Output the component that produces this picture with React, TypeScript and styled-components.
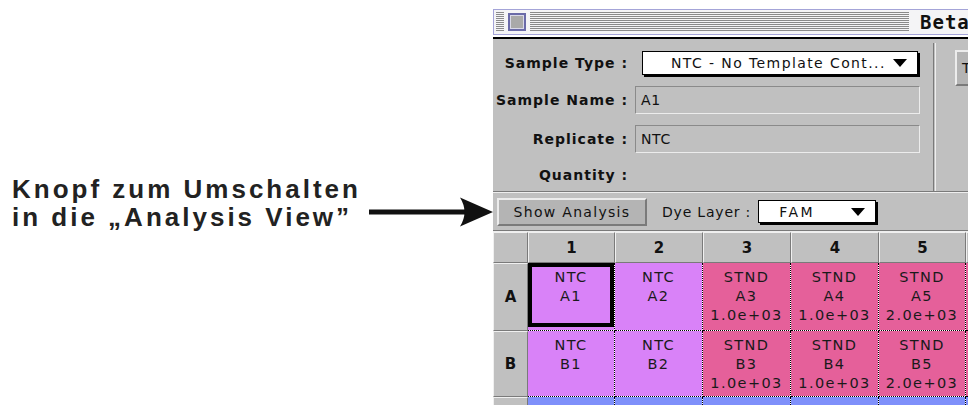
import React from "react";
import styled, { createGlobalStyle, css } from "styled-components";

const Global = createGlobalStyle`
  html, body { margin: 0; padding: 0; background: #fff; }
  body { width: 968px; height: 405px; overflow: hidden; }
`;

const Page = styled.div`
  display: flex;
  width: 968px;
  height: 405px;
  overflow: hidden;
  background: #fff;
`;

const Annotation = styled.div`
  flex: none;
  width: 493px;
  display: flex;
  align-items: flex-start;
  padding-top: 175px;
  box-sizing: border-box;
`;

const Caption = styled.div`
  margin-left: 12px;
  font-family: "Liberation Sans", Arial, sans-serif;
  font-weight: 700;
  font-size: 26px;
  line-height: 28px;
  letter-spacing: 3px;
  color: #222;
  white-space: nowrap;
`;

const ArrowSvg = styled.svg`
  margin-left: auto;
  margin-top: 22px;
  flex: none;
`;

const Win = styled.div`
  flex: none;
  width: 520px;
  margin-top: 9px;
  background: #fff;
  font-family: "DejaVu Sans", sans-serif;
  color: #111;
`;

const TitleBar = styled.div`
  height: 26px;
  box-sizing: border-box;
  border: 1px solid #a4a4d8;
  background: #f4f4f6;
  display: flex;
  align-items: center;
  padding: 0 2px;
  gap: 3px;
  overflow: hidden;
`;

const Stripes = styled.div<{ $w: number }>`
  height: 20px;
  width: ${(p) => p.$w}px;
  flex: none;
  background: repeating-linear-gradient(to bottom, #8a8a8a 0 1px, #f4f4f6 1px 2px);
`;

const CloseBox = styled.div`
  flex: none;
  width: 18px;
  height: 18px;
  box-sizing: border-box;
  border: 2px solid #6a6aa8;
  background: #a9a9a9;
  box-shadow: inset 0 0 0 1px #d8d8e8;
  margin: 0 1px;
`;

const Title = styled.div`
  flex: none;
  padding: 0 8px;
  font-family: "DejaVu Sans Mono", monospace;
  font-weight: 700;
  font-size: 19px;
  letter-spacing: 1px;
  color: #111;
`;

const TopPanel = styled.div`
  margin-top: 2px;
  border-top: 2px solid #000;
  height: 152px;
  background: #c0c0c0;
  display: flex;
`;

const Form = styled.div`
  flex: none;
  width: 440px;
  padding-top: 12px;
  display: grid;
  grid-template-columns: 135px 1fr;
  grid-template-rows: 24px 28px 28px 22px;
  row-gap: 11px;
  column-gap: 7px;
  align-items: center;
  align-content: start;
`;

const Label = styled.div`
  justify-self: end;
  font-weight: 700;
  font-size: 14px;
  letter-spacing: 1px;
  white-space: nowrap;
  color: #111;
`;

const Popup = styled.div<{ $w: number; $pad: number; $ls: number }>`
  width: ${(p) => p.$w}px;
  height: 100%;
  box-sizing: border-box;
  background: #fff;
  border: 1px solid #000;
  box-shadow: 2px 2px 0 #000;
  display: flex;
  align-items: center;
  padding: 0 10px 0 ${(p) => p.$pad}px;
  font-size: 14px;
  letter-spacing: ${(p) => p.$ls}px;
  color: #111;
  white-space: nowrap;
`;

const PopupText = styled.span`
  flex: 1;
`;

const Tri = styled.span`
  flex: none;
  width: 0;
  height: 0;
  border-left: 7px solid transparent;
  border-right: 7px solid transparent;
  border-top: 8px solid #000;
`;

const Field = styled.div`
  width: 285px;
  height: 100%;
  box-sizing: border-box;
  border-top: 1px solid #8a8a8a;
  border-left: 1px solid #8a8a8a;
  border-bottom: 1px solid #ececec;
  border-right: 1px solid #ececec;
  display: flex;
  align-items: center;
  padding-left: 5px;
  font-size: 14px;
  letter-spacing: 0.6px;
  color: #111;
`;

const PopupCell = styled.div`
  padding-left: 7px;
  height: 100%;
`;

const VDivider = styled.div`
  flex: none;
  margin-top: 4px;
  width: 1px;
  border-left: 1px solid #7a7a7a;
  border-right: 1px solid #eee;
`;

const SideArea = styled.div`
  flex: 1;
  padding: 11px 0 0 19px;
  overflow: hidden;
`;

const BevelButton = styled.div<{ $w: number; $h: number; $start?: boolean }>`
  width: ${(p) => p.$w}px;
  height: ${(p) => p.$h}px;
  box-sizing: border-box;
  background: #b4b4b4;
  border-top: 2px solid #ececec;
  border-left: 2px solid #ececec;
  border-bottom: 2px solid #7a7a7a;
  border-right: 2px solid #7a7a7a;
  display: flex;
  align-items: center;
  justify-content: ${(p) => (p.$start ? "flex-start" : "center")};
  padding-left: ${(p) => (p.$start ? "5px" : "0")};
  font-size: 14px;
  letter-spacing: 1.3px;
  color: #111;
  white-space: nowrap;
  flex: none;
`;

const HRule = styled.div`
  height: 0;
  border-top: 1px solid #7a7a7a;
  border-bottom: 1px solid #eee;
`;

const Toolbar = styled.div`
  height: 37px;
  background: #c0c0c0;
  display: flex;
  align-items: center;
  padding-left: 4px;
  gap: 15px;
`;

const ToolLabel = styled.span`
  font-size: 14px;
  letter-spacing: 0.8px;
  color: #111;
  white-space: nowrap;
`;

const DyePopup = styled.div`
  height: 23px;
  margin-left: -8px;
`;

const Grid = styled.div`
  display: grid;
  grid-template-columns: 35px 87px 88px 88px 88px 87px 88px;
  grid-template-rows: 31px 68px 66px 66px;
  background: #fff;
`;

const HeadCell = styled.div`
  background: #c0c0c0;
  border-left: 1px solid #f0f0f0;
  border-top: 1px solid #f0f0f0;
  border-right: 1px solid #7a7a7a;
  border-bottom: 1px solid #7a7a7a;
  display: flex;
  align-items: center;
  justify-content: center;
  font-weight: 700;
  font-size: 15px;
  color: #111;
  overflow: hidden;
`;

type Kind = "ntc" | "stnd" | "unkn";
const kindColor: Record<Kind, string> = {
  ntc: "#d982f8",
  stnd: "#e5609a",
  unkn: "#7f90fa",
};

const Well = styled.div<{ $kind: Kind; $selected?: boolean }>`
  position: relative;
  background: ${(p) => kindColor[p.$kind]};
  background-clip: padding-box;
  border-right: 1px dotted #000;
  border-bottom: 1px dotted #000;
  padding-top: 5px;
  text-align: center;
  font-size: 14.5px;
  line-height: 19px;
  letter-spacing: 1.4px;
  color: #1a1a1a;
  ${(p) =>
    p.$selected &&
    css`
      &::after {
        content: "";
        position: absolute;
        left: 0;
        top: 0;
        right: 0;
        bottom: 3px;
        border: 4px solid #000;
      }
    `}
`;

const Line = styled.div``;

type WellData = { kind: Kind; lines: string[]; selected?: boolean };

const rows: { id: string; wells: WellData[] }[] = [
  {
    id: "A",
    wells: [
      { kind: "ntc", lines: ["NTC", "A1"], selected: true },
      { kind: "ntc", lines: ["NTC", "A2"] },
      { kind: "stnd", lines: ["STND", "A3", "1.0e+03"] },
      { kind: "stnd", lines: ["STND", "A4", "1.0e+03"] },
      { kind: "stnd", lines: ["STND", "A5", "2.0e+03"] },
      { kind: "stnd", lines: [] },
    ],
  },
  {
    id: "B",
    wells: [
      { kind: "ntc", lines: ["NTC", "B1"] },
      { kind: "ntc", lines: ["NTC", "B2"] },
      { kind: "stnd", lines: ["STND", "B3", "1.0e+03"] },
      { kind: "stnd", lines: ["STND", "B4", "1.0e+03"] },
      { kind: "stnd", lines: ["STND", "B5", "2.0e+03"] },
      { kind: "stnd", lines: [] },
    ],
  },
  {
    id: "C",
    wells: [1, 2, 3, 4, 5, 6].map((n) => ({
      kind: "unkn" as Kind,
      lines: n < 6 ? ["UNKN", "C" + n] : [],
    })),
  },
];

export default function App() {
  return (
    <>
      <Global />
      <Page>
        <Annotation>
          <Caption>
            <div>Knopf zum Umschalten</div>
            <div>in die „Analysis View”</div>
          </Caption>
          <ArrowSvg width="124" height="30" viewBox="0 0 124 30">
            <rect x="0" y="12.5" width="98" height="5" fill="#111" />
            <path d="M124 15 L91 0.5 Q100 15 91 29.5 Z" fill="#111" />
          </ArrowSvg>
        </Annotation>
        <Win>
          <TitleBar>
            <Stripes $w={8} />
            <CloseBox />
            <Stripes $w={379} />
            <Title>Beta</Title>
          </TitleBar>
          <TopPanel>
            <Form>
              <Label>Sample Type :</Label>
              <PopupCell>
                <Popup $w={276} $pad={28} $ls={1.4}>
                  <PopupText>NTC - No Template Cont...</PopupText>
                  <Tri />
                </Popup>
              </PopupCell>
              <Label>Sample Name :</Label>
              <Field>A1</Field>
              <Label>Replicate :</Label>
              <Field>NTC</Field>
              <Label>Quantity :</Label>
              <div />
            </Form>
            <VDivider />
            <SideArea>
              <BevelButton $w={60} $h={36} $start>T</BevelButton>
            </SideArea>
          </TopPanel>
          <HRule />
          <Toolbar>
            <BevelButton $w={150} $h={28}>Show Analysis</BevelButton>
            <ToolLabel>Dye Layer :</ToolLabel>
            <DyePopup>
              <Popup $w={118} $pad={20} $ls={2.5}>
                <PopupText>FAM</PopupText>
                <Tri />
              </Popup>
            </DyePopup>
          </Toolbar>
          <HRule />
          <Grid>
            <HeadCell />
            {[1, 2, 3, 4, 5, 6].map((n) => (
              <HeadCell key={n}>{n < 6 ? n : ""}</HeadCell>
            ))}
            {rows.map((r) => (
              <React.Fragment key={r.id}>
                <HeadCell>{r.id === "C" ? "" : r.id}</HeadCell>
                {r.wells.map((w, i) => (
                  <Well key={i} $kind={w.kind} $selected={w.selected}>
                    {w.lines.map((l) => (
                      <Line key={l}>{l}</Line>
                    ))}
                  </Well>
                ))}
              </React.Fragment>
            ))}
          </Grid>
        </Win>
      </Page>
    </>
  );
}
